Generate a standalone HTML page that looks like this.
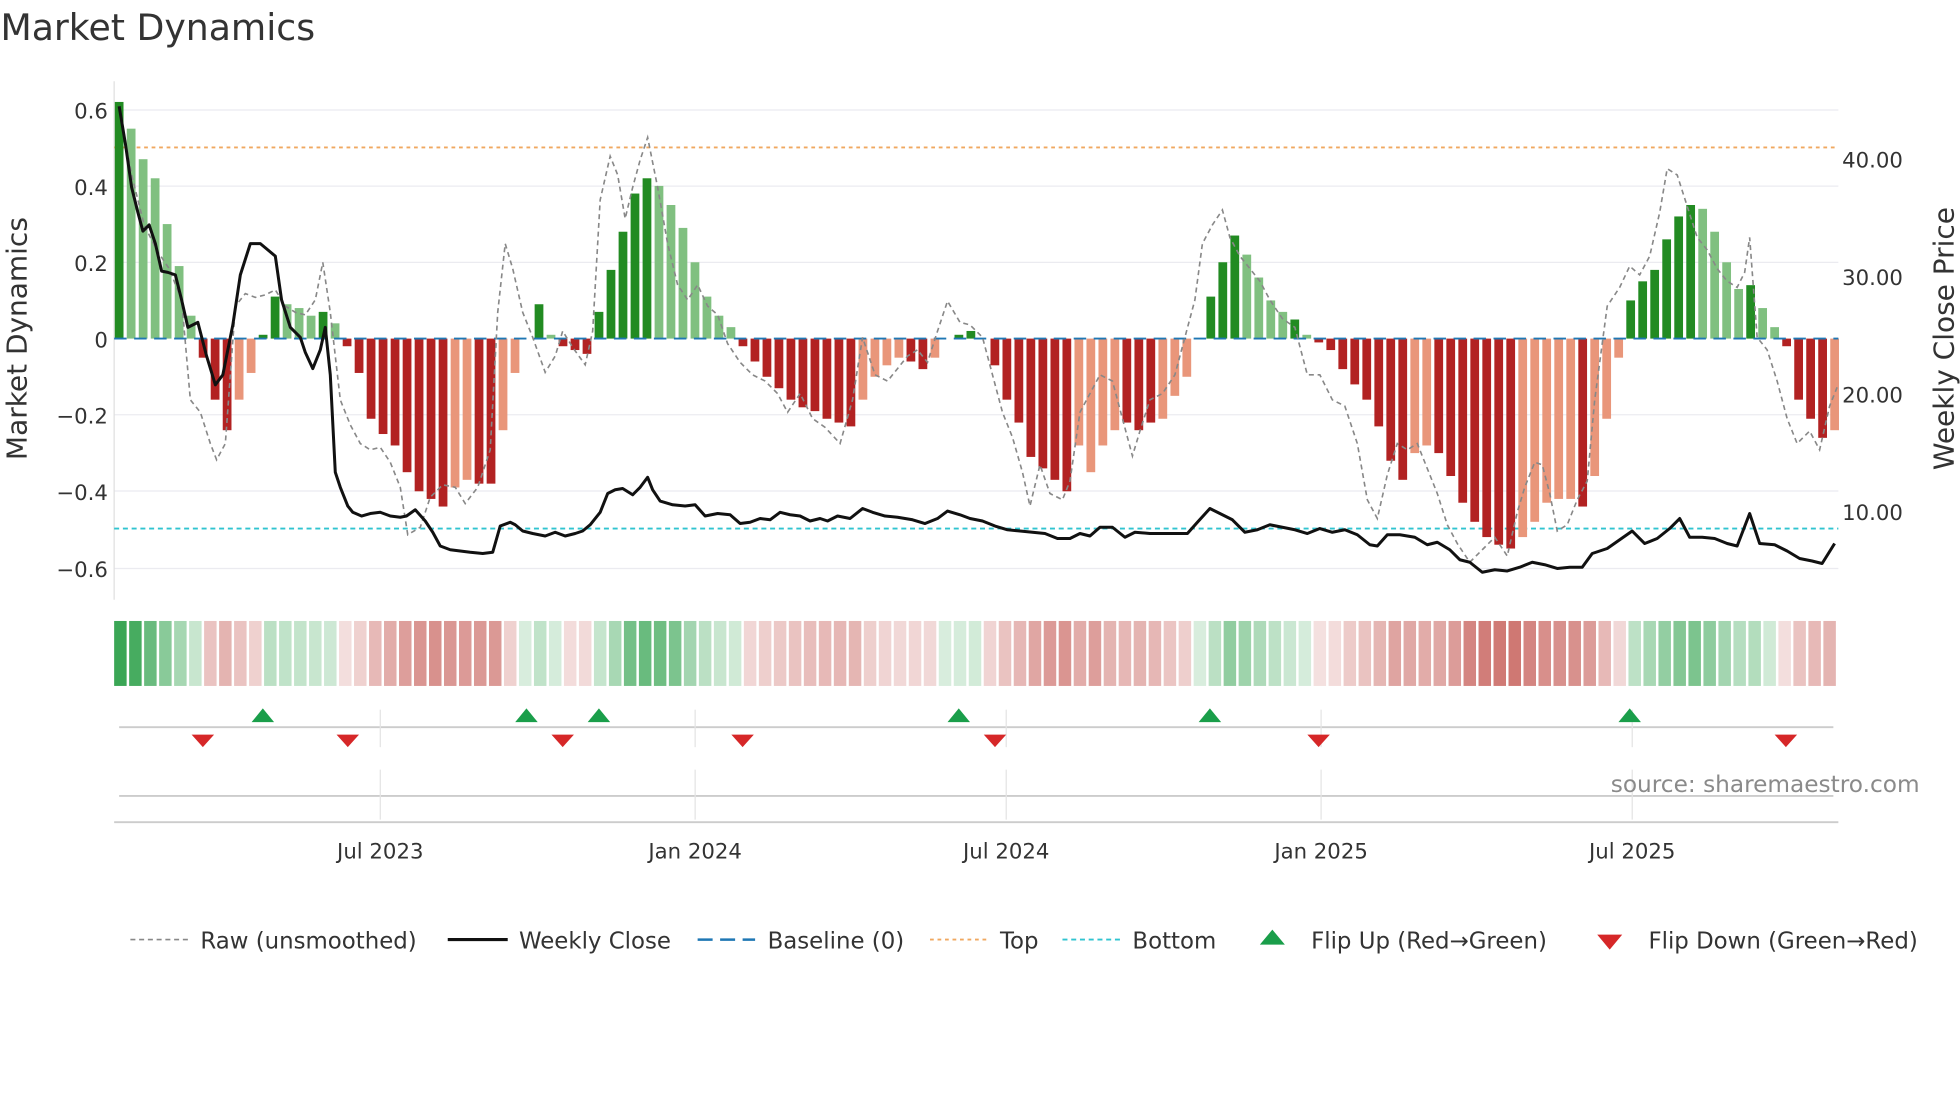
<!DOCTYPE html>
<html><head><meta charset="utf-8"><style>
html,body{margin:0;padding:0;background:#fff;}
svg{display:block;font-family:"DejaVu Sans","Liberation Sans",sans-serif;}
</style></head><body>
<svg id="s" width="1960" height="1102" viewBox="0 0 1568 882" xmlns="http://www.w3.org/2000/svg">
<rect width="1568" height="882" fill="#fff"/>
<text x="0" y="32" font-size="29" fill="#333">Market Dynamics</text>
<g id="grid" stroke="#ebebf0" stroke-width="1">
<line x1="91" x2="1471" y1="88" y2="88"/><line x1="91" x2="1471" y1="149" y2="149"/><line x1="91" x2="1471" y1="210" y2="210"/><line x1="91" x2="1471" y1="332" y2="332"/><line x1="91" x2="1471" y1="393" y2="393"/><line x1="91" x2="1471" y1="455" y2="455"/>
</g>
<line x1="91" x2="91" y1="65" y2="480" stroke="#e0e0e0"/>
<g font-size="17" fill="#333" text-anchor="end">
<text x="86" y="95">0.6</text><text x="86" y="156">0.4</text><text x="86" y="217">0.2</text><text x="86" y="278">0</text><text x="86" y="339">−0.2</text><text x="86" y="400">−0.4</text><text x="86" y="462">−0.6</text>
</g>
<g font-size="17" fill="#333">
<text x="1474" y="134">40.00</text><text x="1474" y="228">30.00</text><text x="1474" y="322">20.00</text><text x="1474" y="416">10.00</text>
</g>
<text transform="translate(21,271) rotate(-90)" font-size="22.4" fill="#333" text-anchor="middle">Market Dynamics</text>
<text transform="translate(1563,271) rotate(-90)" font-size="22.4" fill="#333" text-anchor="middle">Weekly Close Price</text>
<line x1="91" x2="1471" y1="118" y2="118" stroke="#f0a860" stroke-width="1.5" stroke-dasharray="3,3"/>
<line x1="91" x2="1471" y1="423" y2="423" stroke="#30c4d0" stroke-width="1.5" stroke-dasharray="4,3"/>
<g id="bars"></g>
<line x1="91" x2="1471" y1="271" y2="271" stroke="#1f77b4" stroke-width="1.5" stroke-dasharray="10,6"/>
<polyline id="raw" fill="none" stroke="#888" stroke-width="1.3" stroke-dasharray="4,3"/>
<polyline id="close" fill="none" stroke="#111" stroke-width="2.4" stroke-linejoin="round"/>
<g id="heat"></g>
<line x1="95" x2="1467" y1="582" y2="582" stroke="#ccc" stroke-width="1.5"/>
<line x1="95" x2="1467" y1="637" y2="637" stroke="#ccc" stroke-width="1.5"/>
<line x1="91" x2="1471" y1="658" y2="658" stroke="#ccc" stroke-width="1.5"/>
<g stroke="#e4e4e4"><line x1="304" x2="304" y1="568" y2="598"/><line x1="556" x2="556" y1="568" y2="598"/><line x1="805" x2="805" y1="568" y2="598"/><line x1="1057" x2="1057" y1="568" y2="598"/><line x1="1306" x2="1306" y1="568" y2="598"/>
<line x1="304" x2="304" y1="616" y2="656"/><line x1="556" x2="556" y1="616" y2="656"/><line x1="805" x2="805" y1="616" y2="656"/><line x1="1057" x2="1057" y1="616" y2="656"/><line x1="1306" x2="1306" y1="616" y2="656"/></g>
<g id="flips"></g>
<text x="1536" y="634" font-size="18.6" fill="#8a8a8a" text-anchor="end">source: sharemaestro.com</text>
<g font-size="17" fill="#333" text-anchor="middle">
<text x="304" y="687">Jul 2023</text><text x="556" y="687">Jan 2024</text><text x="805" y="687">Jul 2024</text><text x="1057" y="687">Jan 2025</text><text x="1306" y="687">Jul 2025</text>
</g>
<g font-size="18.3" fill="#333">
<line x1="104" x2="150" y1="752" y2="752" stroke="#888" stroke-width="1.3" stroke-dasharray="4,3"/><text x="160" y="759">Raw (unsmoothed)</text>
<line x1="358" x2="406" y1="752" y2="752" stroke="#111" stroke-width="2.5"/><text x="415" y="759">Weekly Close</text>
<line x1="558" x2="604" y1="752" y2="752" stroke="#1f77b4" stroke-width="2" stroke-dasharray="12,6"/><text x="614" y="759">Baseline (0)</text>
<line x1="744" x2="790" y1="752" y2="752" stroke="#f0a860" stroke-width="1.5" stroke-dasharray="3,3"/><text x="800" y="759">Top</text>
<line x1="850" x2="896" y1="752" y2="752" stroke="#30c4d0" stroke-width="1.5" stroke-dasharray="4,3"/><text x="906" y="759">Bottom</text>
<polygon points="1008,756 1018,744 1028,756" fill="#1a9e4a"/><text x="1049" y="759">Flip Up (Red→Green)</text>
<polygon points="1278,748 1298,748 1288,760" fill="#d62728"/><text x="1319" y="759">Flip Down (Green→Red)</text>
</g>
</svg>
<script>
var NS="http://www.w3.org/2000/svg";
function el(t,a,p){var e=document.createElementNS(NS,t);for(var k in a)e.setAttribute(k,a[k]);document.getElementById(p).appendChild(e);return e;}
var v="0.62d,0.55l,0.47l,0.42l,0.30l,0.19l,0.06l,-0.05d,-0.16d,-0.24d,-0.16l,-0.09l,0.01d,0.11d,0.09l,0.08l,0.06l,0.07d,0.04l,-0.02d,-0.09d,-0.21d,-0.25d,-0.28d,-0.35d,-0.40d,-0.42d,-0.44d,-0.39l,-0.37l,-0.38d,-0.38d,-0.24l,-0.09l,0.00l,0.09d,0.01l,-0.02d,-0.03d,-0.04d,0.07d,0.18d,0.28d,0.38d,0.42d,0.40l,0.35l,0.29l,0.20l,0.11l,0.06l,0.03l,-0.02d,-0.06d,-0.10d,-0.13d,-0.16d,-0.18d,-0.19d,-0.21d,-0.22d,-0.23d,-0.16l,-0.10l,-0.07l,-0.05l,-0.06d,-0.08d,-0.05l,0.00l,0.01d,0.02d,0.00l,-0.07d,-0.16d,-0.22d,-0.31d,-0.34d,-0.37d,-0.40d,-0.28l,-0.35l,-0.28l,-0.24l,-0.22d,-0.24d,-0.22d,-0.21l,-0.15l,-0.10l,0.00l,0.11d,0.20d,0.27d,0.22l,0.16l,0.10l,0.07l,0.05d,0.01l,-0.01d,-0.03d,-0.08d,-0.12d,-0.16d,-0.23d,-0.32d,-0.37d,-0.30l,-0.28l,-0.30d,-0.36d,-0.43d,-0.48d,-0.52d,-0.54d,-0.55d,-0.52l,-0.48l,-0.43l,-0.42l,-0.42l,-0.44d,-0.36l,-0.21l,-0.05l,0.10d,0.15d,0.18d,0.26d,0.32d,0.35d,0.34l,0.28l,0.20l,0.13l,0.14d,0.08l,0.03l,-0.02d,-0.16d,-0.21d,-0.26d,-0.24l".split(",");
var n=v.length,x0=95,x1=1468,st=(x1-x0)/(n-1),vals=[];
v.forEach(function(s,i){var d=s.slice(-1)=="d",val=parseFloat(s);vals.push(val);var h=Math.abs(val)*305.5;var x=x0+i*st-3.5;
var c=val>=0?(d?"#228b22":"#80c080"):(d?"#b22222":"#e9967a");
if(h>0.5)el("rect",{x:x,y:val>=0?271-h:271,width:7,height:h,fill:c},"bars");});
var raw="95,85 105,140 115,180 125,200 135,215 145,240 152,320 160,330 168,355 173,368 180,355 188,245 196,235 204,238 212,236 220,232 228,245 236,250 244,252 252,240 258,210 264,250 272,320 280,340 288,355 296,360 304,358 312,370 320,390 326,428 336,422 344,398 354,388 364,390 372,403 382,390 392,360 398,250 404,195 410,215 418,250 426,270 436,298 444,285 450,265 458,278 468,292 474,265 480,160 488,125 494,140 500,175 506,150 512,128 518,110 526,150 534,195 542,228 550,240 558,228 566,245 574,252 582,275 592,290 602,300 612,305 622,315 630,330 640,315 650,335 660,342 672,355 682,320 690,270 700,300 710,305 718,295 726,285 734,280 742,290 750,265 758,241 768,258 776,260 786,270 794,300 802,330 810,350 818,378 824,405 832,372 840,395 850,400 856,385 864,330 872,315 880,300 890,305 898,335 906,365 912,345 920,320 930,315 940,300 948,270 956,240 962,195 970,180 978,168 984,190 992,205 1000,215 1008,225 1016,240 1026,255 1036,262 1046,300 1056,300 1066,320 1076,325 1086,355 1094,400 1102,415 1110,380 1118,355 1126,360 1134,355 1142,375 1150,395 1158,420 1166,435 1176,450 1186,440 1196,430 1206,445 1214,410 1220,390 1228,370 1234,372 1240,395 1246,425 1254,420 1262,400 1270,385 1276,320 1286,245 1296,230 1304,213 1312,220 1320,205 1328,170 1334,135 1342,140 1350,165 1358,190 1366,200 1374,215 1382,225 1390,230 1396,218 1400,190 1406,270 1414,280 1422,305 1430,335 1438,355 1448,345 1456,360 1464,325 1470,310";
document.getElementById("raw").setAttribute("points",raw);
var cl="95,85 100,115 105,150 110,170 114,185 119,180 124,195 129,217 134,218 140,220 145,240 150,262 158,258 165,285 172,308 178,300 186,260 192,220 200,195 208,195 214,200 220,205 225,240 232,262 240,270 244,282 250,295 256,280 260,262 264,300 268,378 272,390 278,405 282,410 289,413 296,411 304,410 312,413 320,414 325,413 332,408 340,417 346,426 352,437 360,440 368,441 376,442 386,443 394,442 400,421 408,418 412,420 418,425 426,427 436,429 444,426 452,429 460,427 466,425 472,420 480,410 486,395 492,392 498,391 506,396 512,390 518,382 522,392 528,401 538,404 548,405 556,404 564,413 574,411 584,412 592,419 600,418 608,415 616,416 624,410 632,412 640,413 648,417 656,415 662,417 670,413 680,415 690,407 698,410 708,413 718,414 730,416 740,419 750,415 758,409 768,412 776,415 786,417 796,421 806,424 816,425 826,426 836,427 846,431 856,431 864,427 872,429 880,422 890,422 900,430 908,426 920,427 930,427 940,427 950,427 958,418 968,407 976,411 986,416 996,426 1006,424 1016,420 1026,422 1036,424 1046,427 1056,423 1066,426 1076,424 1086,428 1096,436 1102,437 1110,428 1120,428 1132,430 1142,436 1150,434 1160,440 1168,448 1176,450 1186,458 1196,456 1206,457 1216,454 1226,450 1236,452 1246,455 1256,454 1266,454 1274,443 1286,439 1296,432 1306,425 1316,435 1326,431 1336,423 1344,415 1352,430 1362,430 1372,431 1382,435 1390,437 1400,411 1408,435 1420,436 1430,441 1440,447 1450,449 1458,451 1468,435";
document.getElementById("close").setAttribute("points",cl);
var m=115,w=(1471-91)/m;
function mix(a,b,t){return "rgb("+a.map(function(c,i){return Math.round(c+(b[i]-c)*t)}).join(",")+")";}
for(var j=0;j<m;j++){var cx=91+(j+0.5)*w;var idx=Math.round((cx-x0)/st);idx=Math.max(0,Math.min(n-1,idx));var val=vals[idx];
var t=0.2+0.8*Math.min(1,Math.abs(val)/0.6);
var col=val>=0?mix([255,255,255],[58,166,85],t):mix([255,255,255],[204,110,105],t);
el("rect",{x:91+j*w,y:497,width:w-2,height:52,fill:col},"heat");}
[210,421,479,767,968,1304].forEach(function(x){el("polygon",{points:(x-9)+",578 "+x+",567 "+(x+9)+",578",fill:"#1a9e4a"},"flips");});
[162,278,450,594,796,1055,1429].forEach(function(x){el("polygon",{points:(x-9)+",588 "+(x+9)+",588 "+x+",598",fill:"#d62728"},"flips");});
</script>
</body></html>
